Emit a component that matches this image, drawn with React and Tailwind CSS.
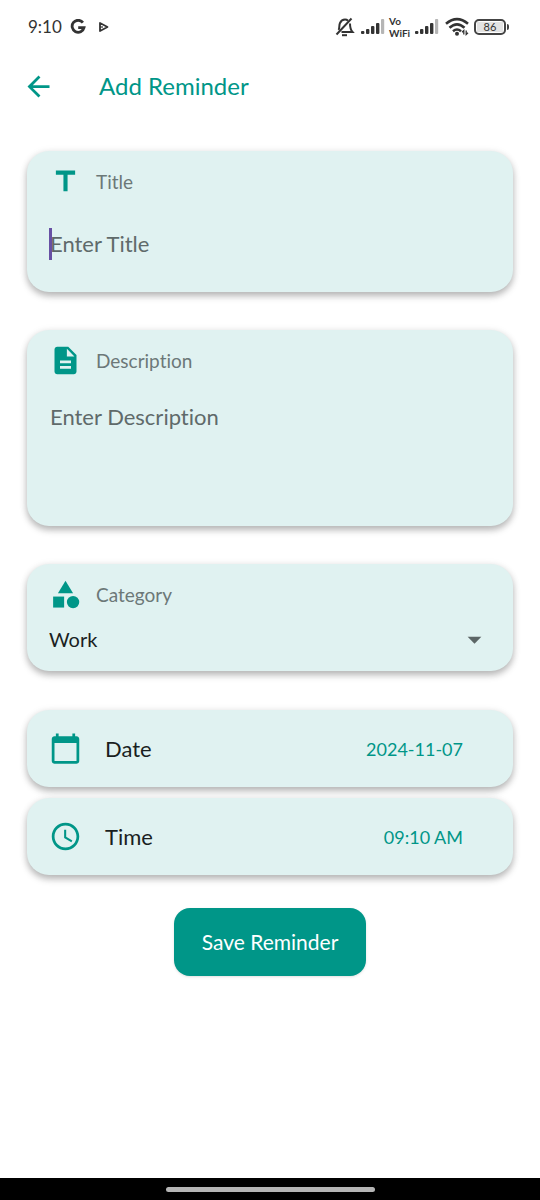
import { useState } from 'react';
import {
  MdArrowBack,
  MdTitle,
  MdDescription,
  MdCategory,
  MdCalendarToday,
  MdAccessTime,
  MdArrowDropDown,
} from 'react-icons/md';

const card = 'rounded-[22px] bg-[#e0f2f1] shadow-[0_4px_7px_rgba(0,0,0,0.26),0_1px_8px_rgba(0,0,0,0.08)]';

function Signal() {
  return (
    <svg width="24" height="16" viewBox="0 0 24 16" aria-hidden="true">
      <rect x="0" y="12" width="3.4" height="3" rx="1" fill="#333" />
      <rect x="5" y="10" width="3.4" height="5" rx="1" fill="#333" />
      <rect x="10" y="7" width="3.4" height="8" rx="1" fill="#333" />
      <rect x="15" y="4" width="3.4" height="11" rx="1" fill="#333" />
      <rect x="20" y="0" width="3.2" height="15" rx="1" fill="#b5b5b5" />
    </svg>
  );
}

function StatusBar() {
  return (
    <div className="flex h-[54px] items-center pr-[31px] pl-7 text-[#333]">
      <span className="text-[17px] leading-6">9:10</span>
      <svg className="ml-2" width="16" height="16" viewBox="0 0 16 16" fill="none" aria-hidden="true">
        <path d="M12.9 3.6A6 6 0 1 0 14 8.6H8.2" stroke="#333" strokeWidth="2.8" />
      </svg>
      <svg className="ml-3" width="12" height="12" viewBox="0 0 12 12" fill="none" aria-hidden="true">
        <path d="M2 2V10L9.5 6Z" stroke="#333" strokeWidth="1.8" strokeLinejoin="round" />
        <path d="M2 6H5" stroke="#333" strokeWidth="1.2" />
      </svg>
      <div className="ml-auto flex items-center">
        <svg width="20" height="20" viewBox="0 0 20 20" fill="none" stroke="#333" strokeWidth="2" aria-hidden="true">
          <path d="M1.5 17.5L16.5 1.5" />
          <path d="M3.5 13C4.8 11.5 3.8 8.5 5 6C6 3.8 8 2.6 10 2.6C11.2 2.6 12.2 3 13 3.8" />
          <path d="M15 6.5C15 10.5 15.2 12.5 17.5 15H6.5" />
          <path d="M7 18.2H12" />
        </svg>
        <div className="ml-1.5 flex"><Signal /></div>
        <div className="ml-1 flex w-6 flex-col text-[10px] leading-3 font-bold">
          <span>Vo</span>
          <span>WiFi</span>
        </div>
        <div className="ml-0.5 flex"><Signal /></div>
        <svg className="ml-1.5" width="25" height="20" viewBox="0 0 25 20" fill="none" stroke="#333" strokeWidth="2.6" aria-hidden="true">
          <path d="M1 6.8Q12 -2.5 23 6.8" />
          <path d="M4.5 10.8Q12 4 19.5 10.8" />
          <path d="M8 14.2Q12 10.8 16 14.2" />
          <circle cx="12" cy="16.8" r="2" fill="#333" stroke="none" />
          <path d="M18.8 17.5V13.5L17 15.2M21.2 13.5V17.5L23 15.8" strokeWidth="1.3" />
        </svg>
        <div className="ml-1 flex h-4 w-8 items-center rounded-[5px] border-2 border-[#444] p-px">
          <span className="flex h-full flex-1 items-center justify-center bg-[#e3e3e3] text-[11px] leading-3">86</span>
        </div>
        <span className="ml-px h-1.5 w-0.5 rounded-r bg-[#444]" />
      </div>
    </div>
  );
}

function FieldLabel({ icon: Icon, htmlFor, children }) {
  return (
    <label htmlFor={htmlFor} className="flex items-center gap-3.5 text-[19px] leading-8 text-[#6c7878]">
      <Icon className="size-[33px] text-[#009688]" aria-hidden="true" />
      {children}
    </label>
  );
}

function PickerRow({ icon: Icon, label, value }) {
  return (
    <button type="button" className={`${card} flex h-[77px] w-full items-center pr-[50px] pl-[22px] text-left`}>
      <Icon className="size-[33px] text-[#009688]" aria-hidden="true" />
      <span className="ml-[23px] text-[22px] leading-8 text-[#1a1f1f]">{label}</span>
      <span className="ml-auto text-lg leading-8 text-[#009688]">{value}</span>
    </button>
  );
}

export default function App() {
  const [title, setTitle] = useState('');
  const [description, setDescription] = useState('');
  const [category, setCategory] = useState('Work');

  return (
    <div className="flex min-h-screen flex-col bg-white font-['Lato',sans-serif] [font-variant-ligatures:none]">
      <StatusBar />
      <header className="flex h-16 items-center pl-[22px] text-[#009688]">
        <button type="button" aria-label="Back">
          <MdArrowBack className="size-[33px]" />
        </button>
        <h1 className="ml-11 text-2xl leading-8">Add Reminder</h1>
      </header>

      <form className="flex flex-1 flex-col px-[27px] pt-[33px]" onSubmit={(e) => e.preventDefault()}>
        <div className={`${card} h-[141px] px-[22px] pt-3.5`}>
          <FieldLabel icon={MdTitle} htmlFor="title">Title</FieldLabel>
          <div className="relative mt-[30px]">
            <input
              id="title"
              type="text"
              value={title}
              onChange={(e) => setTitle(e.target.value)}
              placeholder="Enter Title"
              className="block w-full bg-transparent pl-px text-[22px] leading-8 text-[#1a1f1f] caret-[#6750a4] outline-none placeholder:text-[#5f6a6a]"
            />
            {title === '' && <span className="absolute inset-y-0 left-0 w-[3px] bg-[#6750a4]" />}
          </div>
        </div>

        <div className={`${card} mt-[38px] h-[196px] px-[22px] pt-3.5`}>
          <FieldLabel icon={MdDescription} htmlFor="description">Description</FieldLabel>
          <textarea
            id="description"
            rows={3}
            value={description}
            onChange={(e) => setDescription(e.target.value)}
            placeholder="Enter Description"
            className="mt-6 block w-full resize-none bg-transparent pl-px text-[22px] leading-8 text-[#1a1f1f] outline-none placeholder:text-[#5f6a6a]"
          />
        </div>

        <div className={`${card} mt-[38px] h-[107px] px-[22px] pt-3.5`}>
          <FieldLabel icon={MdCategory} htmlFor="category">Category</FieldLabel>
          <div className="relative mt-3">
            <select
              id="category"
              value={category}
              onChange={(e) => setCategory(e.target.value)}
              className="block w-full appearance-none bg-transparent text-xl leading-8 text-[#1a1f1f] outline-none"
            >
              <option>Work</option>
              <option>Personal</option>
              <option>Health</option>
            </select>
            <MdArrowDropDown className="pointer-events-none absolute top-0 right-0 size-[33px] text-[#5c6666]" aria-hidden="true" />
          </div>
        </div>

        <div className="mt-[39px] flex flex-col gap-[11px]">
          <PickerRow icon={MdCalendarToday} label="Date" value="2024-11-07" />
          <PickerRow icon={MdAccessTime} label="Time" value="09:10 AM" />
        </div>

        <button
          type="submit"
          className="mt-[33px] self-center rounded-2xl bg-[#009688] px-7 py-[18px] text-[21px] leading-8 text-white shadow-sm"
        >
          Save Reminder
        </button>
      </form>

      <div className="flex h-[22px] items-center justify-center bg-black">
        <span className="h-[5px] w-[209px] rounded-full bg-[#b5b5b5]" />
      </div>
    </div>
  );
}
